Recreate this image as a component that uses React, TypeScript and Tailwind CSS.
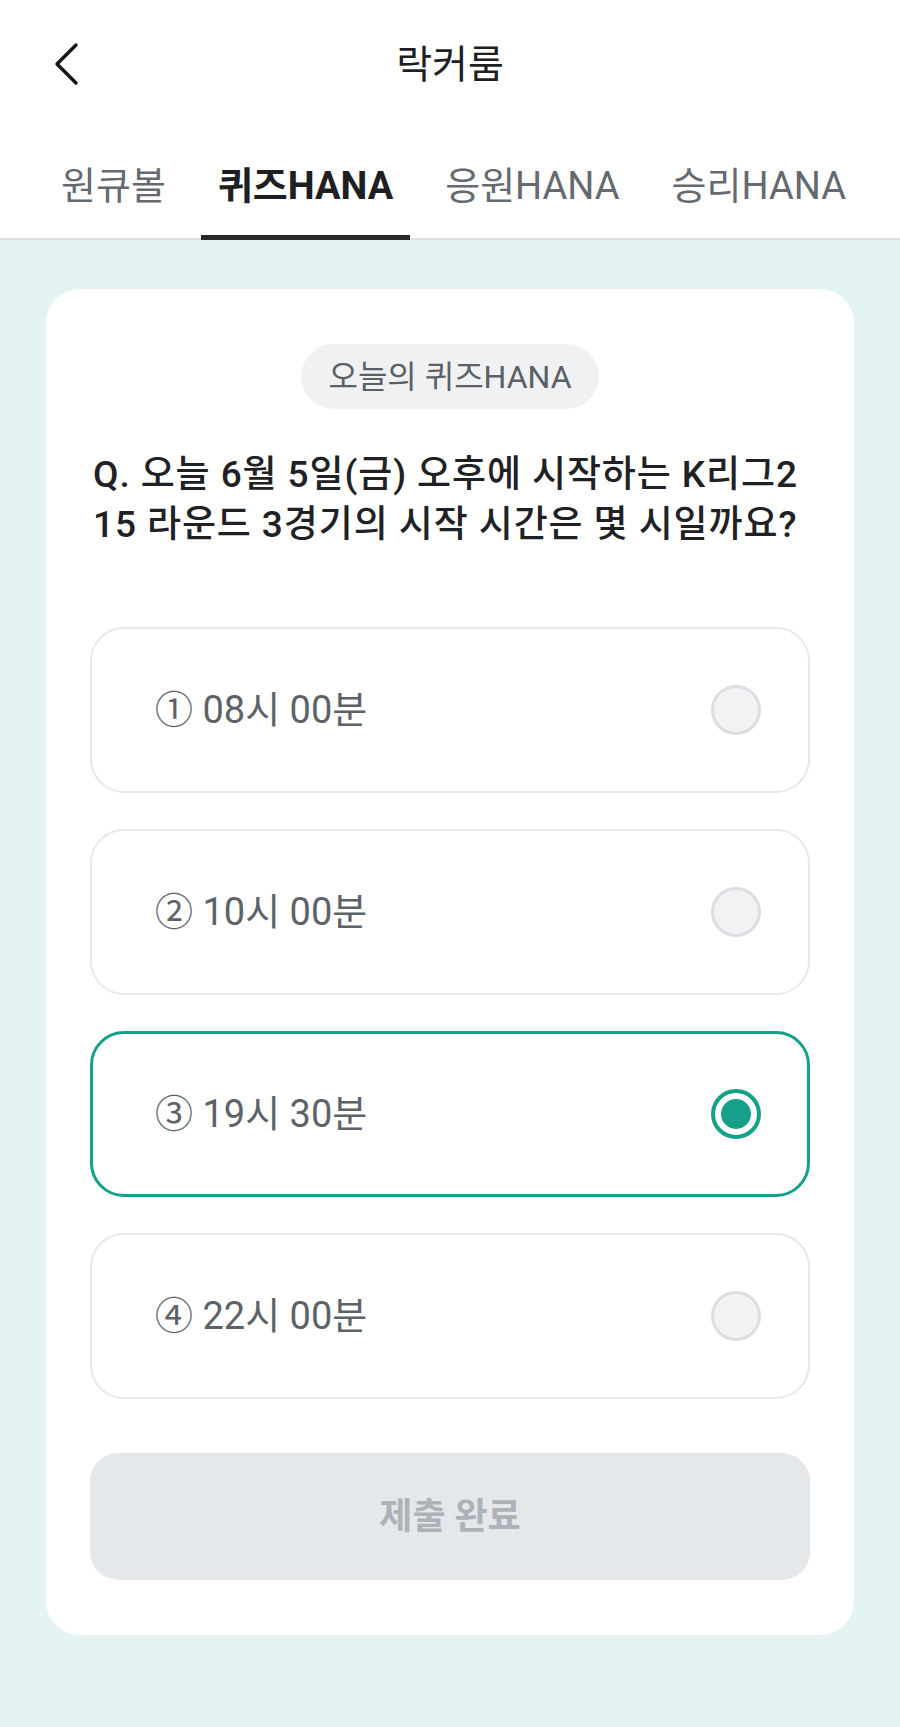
import React from "react";

const options = [
  { label: "① 08시 00분", selected: false },
  { label: "② 10시 00분", selected: false },
  { label: "③ 19시 30분", selected: true },
  { label: "④ 22시 00분", selected: false },
];

const tabs = [
  { label: "원큐볼", active: false },
  { label: "퀴즈HANA", active: true },
  { label: "응원HANA", active: false },
  { label: "승리HANA", active: false },
];

export default function App() {
  return (
    <div
      className="w-[900px] min-h-[1727px] bg-[#e4f4f2] flex flex-col"
      style={{ fontFamily: 'Roboto, "Noto Sans CJK KR", "Noto Sans", sans-serif' }}
    >
      <div className="bg-white">
        <div className="relative h-[130px] flex items-center justify-center">
          <button className="absolute left-[50px] top-[41px] w-[32px] h-[46px] flex items-center justify-center">
            <svg width="28" height="44" viewBox="0 0 28 44" fill="none">
              <path d="M24 3 L5 22 L24 41" stroke="#111" strokeWidth="3.4" strokeLinecap="round" strokeLinejoin="round" />
            </svg>
          </button>
          <h1 className="text-[39px] font-normal text-[#1d1f22]">락커룸</h1>
        </div>
        <div className="h-[110px] flex pl-[44px] gap-[18px] border-b-2 border-[#dde0e3]">
          {tabs.map((t) => (
            <div
              key={t.label}
              className={
                t.active
                  ? "relative h-full flex items-center px-[17px] pt-[4px] text-[38px] font-bold text-[#1d1f22]"
                  : "relative h-full flex items-center px-[17px] pt-[4px] text-[38px] font-normal text-[#646a70]"
              }
            >
              {t.label}
              {t.active && <div className="absolute left-0 right-0 bottom-[-2px] h-[5px] bg-[#26282b]" />}
            </div>
          ))}
        </div>
      </div>

      <div className="px-[46px] pt-[49px] pb-[91px]">
        <div className="bg-white rounded-[34px] px-[44px] pt-[55px] pb-[55px] flex flex-col">
          <div className="flex justify-center">
            <div className="h-[65px] px-[27px] rounded-full bg-[#f0f1f3] flex items-center text-[32px] text-[#5b6066]">
              오늘의 퀴즈HANA
            </div>
          </div>
          <p className="mt-[41px] text-[37px] leading-[50px] font-medium text-[#1f2124] pl-[3px] tracking-[0.9px] whitespace-nowrap">
            Q. 오늘 6월 5일(금) 오후에 시작하는 K리그2
            <br />
            15 라운드 3경기의 시작 시간은 몇 시일까요?
          </p>
          <div className="mt-[77px] flex flex-col gap-[36px]">
            {options.map((o) => (
              <div
                key={o.label}
                className={
                  o.selected
                    ? "h-[166px] rounded-[34px] border-[3px] border-[#14a089] flex items-center justify-between pl-[62px] pr-[46px]"
                    : "h-[166px] rounded-[34px] border-2 border-[#e6e8eb] flex items-center justify-between pl-[63px] pr-[47px]"
                }
              >
                <span className="text-[38px] text-[#5d6267]">{o.label}</span>
                {o.selected ? (
                  <div className="w-[50px] h-[50px] rounded-full border-[4px] border-[#14a089] flex items-center justify-center">
                    <div className="w-[30px] h-[30px] rounded-full bg-[#14a089]" />
                  </div>
                ) : (
                  <div className="w-[50px] h-[50px] rounded-full border-[3px] border-[#dcdee1] bg-[#f1f2f4]" />
                )}
              </div>
            ))}
          </div>
          <button className="mt-[54px] h-[127px] rounded-[28px] bg-[#e5e8eb] flex items-center justify-center text-[36px] font-bold text-[#adb2b8]">
            제출 완료
          </button>
        </div>
      </div>
    </div>
  );
}
